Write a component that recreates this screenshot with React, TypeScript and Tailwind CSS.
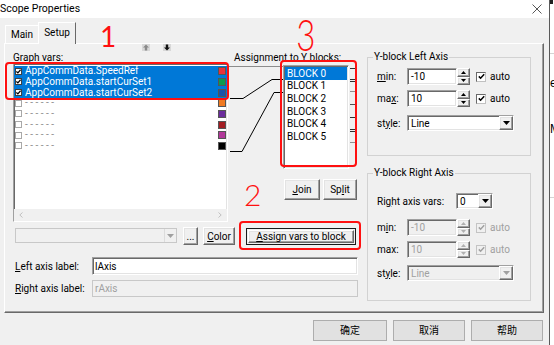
import React from "react";

const sunken =
  "border border-t-[#a0a0a0] border-l-[#a0a0a0] border-r-white border-b-white shadow-[inset_1px_1px_0_#696969,inset_-1px_-1px_0_#e3e3e3]";
const raised =
  "border border-t-white border-l-white border-r-[#696969] border-b-[#696969] shadow-[inset_-1px_-1px_0_#a0a0a0,inset_1px_1px_0_#e3e3e3] bg-[#f0f0f0]";

function U({ children }: { children: React.ReactNode }) {
  return <span className="underline underline-offset-[1px] decoration-[1px]">{children}</span>;
}

function Tri({ up = false, color = "#000", w = 7 }: { up?: boolean; color?: string; w?: number }) {
  const h = Math.ceil(w / 2);
  return (
    <svg width={w} height={h} viewBox={`0 0 ${w} ${h}`}>
      <path d={up ? `M0 ${h} L${w / 2} 0 L${w} ${h} Z` : `M0 0 L${w} 0 L${w / 2} ${h} Z`} fill={color} />
    </svg>
  );
}

function Check({ checked = true, disabled = false }: { checked?: boolean; disabled?: boolean }) {
  return (
    <span
      className={`w-[10px] h-[10px] flex items-center justify-center border ${
        disabled ? "border-[#c4c4c4] bg-[#f0f0f0]" : "border-t-[#696969] border-l-[#696969] border-r-[#c0c0c0] border-b-[#c0c0c0] bg-white"
      }`}
    >
      {checked && (
        <svg width="7" height="7" viewBox="0 0 7 7">
          <path d="M0.8 3.4 L2.6 5.2 L6.2 1.2" fill="none" stroke={disabled ? "#a0a0a0" : "#000"} strokeWidth="1.5" />
        </svg>
      )}
    </span>
  );
}

function Spin({ value, disabled = false }: { value: string; disabled?: boolean }) {
  const tc = disabled ? "#b0b0b0" : "#000";
  return (
    <div className="flex h-full">
      <div
        className={`w-[50px] h-full ${sunken} ${disabled ? "bg-[#f0f0f0] text-[#a0a0a0]" : "bg-white"} pl-[3px] flex items-center`}
      >
        {value}
      </div>
      <div className="w-[13px] h-full flex flex-col">
        <div className={`flex-1 ${raised} flex items-center justify-center`}>
          <Tri up color={tc} w={5} />
        </div>
        <div className={`flex-1 ${raised} flex items-center justify-center`}>
          <Tri color={tc} w={5} />
        </div>
      </div>
    </div>
  );
}

function Select({ value, wClass, disabled = false }: { value: string; wClass: string; disabled?: boolean }) {
  return (
    <div className={`${wClass} h-full flex ${sunken} ${disabled ? "bg-[#f0f0f0] text-[#a0a0a0]" : "bg-white"}`}>
      <div className="flex-1 pl-[3px] flex items-center">{value}</div>
      <div className={`w-[14px] ${raised} flex items-center justify-center`}>
        <Tri color={disabled ? "#a0a0a0" : "#000"} w={7} />
      </div>
    </div>
  );
}

function Btn({ children, cls }: { children: React.ReactNode; cls: string }) {
  return <div className={`${raised} flex items-center justify-center ${cls}`}>{children}</div>;
}

const vars = [
  { name: "AppCommData.SpeedRef", on: true, color: "#e8323c" },
  { name: "AppCommData.startCurSet1", on: true, color: "#0c9a4e" },
  { name: "AppCommData.startCurSet2", on: true, color: "#1b54a8" },
  { name: "------", on: false, color: "#f07a22" },
  { name: "------", on: false, color: "#6b2c9c" },
  { name: "------", on: false, color: "#a31d23" },
  { name: "------", on: false, color: "#b2389a" },
  { name: "------", on: false, color: "#000000" },
];

const blocks = ["BLOCK 0", "BLOCK 1", "BLOCK 2", "BLOCK 3", "BLOCK 4", "BLOCK 5"];

function GraphList() {
  return (
    <div className={`w-[215px] h-[159px] bg-white ${sunken} flex flex-col`}>
      <div className="pt-[2px] flex flex-col">
        {vars.map((v, i) => (
          <div
            key={i}
            className={`h-[10.67px] flex items-center pl-[1px] pr-[1px] ${v.on ? "bg-[#0078d7] text-white" : "text-[#909090]"}`}
          >
            <span
              className={`w-[7px] h-[7px] bg-white border flex items-center justify-center ${
                v.on ? "border-[#404040]" : "border-[#a8a8a8]"
              }`}
            >
              {v.on && (
                <svg width="5" height="5" viewBox="0 0 5 5">
                  <path d="M0.4 2.4 L1.9 3.9 L4.6 0.8" fill="none" stroke="#000" strokeWidth="1.3" />
                </svg>
              )}
            </span>
            <span className="ml-[3px] flex-1 leading-[10px] whitespace-nowrap">{v.on ? v.name : "- - - - - -"}</span>
            <span className="w-[8px] h-[8px] border border-[#555]" style={{ backgroundColor: v.color }} />
          </div>
        ))}
      </div>
      <div className="mt-auto h-[12px] bg-[#f0f0f0] flex items-center justify-between px-[5px]">
        <svg width="4" height="6" viewBox="0 0 4 6">
          <path d="M3.5 0.5 L0.8 3 L3.5 5.5" fill="none" stroke="#c0c0c0" strokeWidth="1" />
        </svg>
        <svg width="4" height="6" viewBox="0 0 4 6">
          <path d="M0.5 0.5 L3.2 3 L0.5 5.5" fill="none" stroke="#c0c0c0" strokeWidth="1" />
        </svg>
      </div>
    </div>
  );
}

export default function App() {
  return (
    <div className="w-[554px] h-[345px] bg-[#f0f0f0] flex overflow-hidden relative text-[10px] text-black font-['Roboto','Noto_Sans_CJK_SC',sans-serif]">
      <div className="w-[549px] h-full flex flex-col">
        {/* title bar */}
        <div className="h-[18px] bg-white flex items-center justify-between shrink-0">
          <span className="text-[10.5px] leading-[18px]">Scope Properties</span>
          <svg className="mr-[7px]" width="10" height="10" viewBox="0 0 10 10">
            <path d="M0.5 0.5L9.5 9.5M9.5 0.5L0.5 9.5" stroke="#444" strokeWidth="0.9" />
          </svg>
        </div>

        {/* tabs */}
        <div className="h-[25px] flex items-end pl-[5px] shrink-0">
          <div className="w-[33px] h-[18px] border-t border-l border-t-white border-l-white flex items-center justify-center pb-[1px]">
            Main
          </div>
          <div className="relative z-10 -mb-[1px] w-[38px] h-[22px] bg-[#f0f0f0] border-t border-l border-r border-t-white border-l-white border-r-[#696969] flex items-center justify-center pb-[2px]">
            Setup
          </div>
        </div>

        {/* panel */}
        <div className="ml-[4px] w-[540px] h-[270px] shrink-0 border border-t-white border-l-white border-r-[#696969] border-b-[#696969] shadow-[inset_-1px_-1px_0_#a0a0a0] flex">
          {/* left section */}
          <div className="w-[362px] pl-[8px] flex flex-col">
            {/* header */}
            <div className="h-[19px] flex">
              <div className="w-[215px] flex flex-col">
                <div className="h-[8px] flex items-start pl-[129px] gap-[13px]">
                  <svg width="8" height="7" viewBox="0 0 8 7">
                    <rect x="0" y="0" width="8" height="7" fill="#d8d8d8" />
                    <path d="M4 0.5 L7 3.5 H5.2 V6.5 H2.8 V3.5 H1 Z" fill="#8a8a8a" />
                  </svg>
                  <svg width="8" height="7" viewBox="0 0 8 7">
                    <rect x="0" y="0" width="8" height="7" fill="#d8d8d8" />
                    <path d="M4 6.5 L7 3.5 H5.2 V0.5 H2.8 V3.5 H1 Z" fill="#111" />
                  </svg>
                </div>
                <div className="h-[11px] leading-[11px]">Graph vars:</div>
              </div>
              <div className="ml-[6px] self-end leading-[11px] whitespace-nowrap">Assignment to Y blocks:</div>
            </div>

            {/* main row */}
            <div className="h-[159px] flex">
              <GraphList />
              <svg width="55" height="159" viewBox="0 0 55 159">
                <path d="M1 3.5 H55" stroke="#8c8c8c" strokeWidth="1" />
                <path d="M2 35.5 H15 L44 16.5 H55" fill="none" stroke="#000" strokeWidth="1" />
                <path d="M2 88.5 H14 L46 29.5 H55" fill="none" stroke="#000" strokeWidth="1" />
              </svg>
              <div className="w-[74px] flex flex-col">
                <div className="mt-[2px] h-[104px] flex">
                  <div className={`w-[66px] h-full bg-white ${sunken} pt-[1px] px-[1px] flex flex-col`}>
                    {blocks.map((b, i) => (
                      <div
                        key={b}
                        className={`h-[12.6px] pl-[2px] flex items-center whitespace-nowrap ${
                          i === 0 ? "bg-[#0078d7] text-white" : ""
                        }`}
                      >
                        {b}
                      </div>
                    ))}
                  </div>
                  <svg width="8" height="104" viewBox="0 0 8 104">
                    <path d="M1 3.5 H6" stroke="#303030" />
                    <path d="M1 14.5 H7" stroke="#303030" />
                    <path d="M1 16.5 H7" stroke="#303030" />
                    <path d="M1 26.5 H7" stroke="#909090" />
                    <path d="M1 39.5 H7" stroke="#505050" />
                    <path d="M1 52.5 H7" stroke="#303030" />
                    <path d="M1 64.5 H7" stroke="#303030" />
                    <path d="M1 66.5 H7" stroke="#303030" />
                    <path d="M1 77.5 H7" stroke="#909090" />
                  </svg>
                </div>
                <div className="mt-[10px] h-[21px] flex gap-[3px] pl-[1px]">
                  <Btn cls="w-[36px] h-full">
                    <U>J</U>oin
                  </Btn>
                  <Btn cls="w-[34px] h-full">
                    Sp<U>l</U>it
                  </Btn>
                </div>
              </div>
            </div>

            {/* controls row */}
            <div className="mt-[5px] h-[18px] flex items-start">
              <div className="ml-[2px] mt-[1px] w-[162px] h-[15px] flex border border-[#c8c8c8] bg-[#f0f0f0]">
                <div className="flex-1" />
                <div className="w-[12px] border-l border-[#dcdcdc] flex items-center justify-center">
                  <Tri color="#a0a0a0" w={7} />
                </div>
              </div>
              <Btn cls="ml-[6px] w-[15px] h-[18px]">...</Btn>
              <Btn cls="ml-[5px] w-[32px] h-[18px]">
                <span>
                  <U>C</U>olor
                </span>
              </Btn>
              <div className="ml-[11px] mt-[1px] w-[110px] h-[17px] border border-[#1a1a1a] p-[1px]">
                <div className={`w-full h-full ${raised} flex items-center justify-center`}>
                  <span>
                    <U>A</U>ssign vars to block
                  </span>
                </div>
              </div>
            </div>

            {/* left axis label */}
            <div className="mt-[12px] h-[18px] flex items-center">
              <span className="ml-[2px] w-[77px]">
                <U>L</U>eft axis label:
              </span>
              <div className={`w-[266px] h-full bg-white ${sunken} pl-[2px] flex items-center`}>lAxis</div>
            </div>
            <div className="mt-[5px] h-[17px] flex items-center">
              <span className="ml-[2px] w-[77px]">
                <U>R</U>ight axis label:
              </span>
              <div className="w-[266px] h-full bg-[#f0f0f0] border border-[#c8c8c8] pl-[2px] flex items-center text-[#a0a0a0]">
                rAxis
              </div>
            </div>
          </div>

          {/* right section */}
          <div className="w-[164px] pt-[7px] flex flex-col">
            <fieldset className="h-[105px] border border-[#d2d2d2]">
              <legend className="ml-[5px] px-[1px] leading-[12px]">Y-block Left Axis</legend>
              <div className="pl-[9px] flex flex-col">
                <div className="mt-[5px] h-[17px] flex items-center">
                  <span className="w-[30px]">
                    <U>m</U>in:
                  </span>
                  <Spin value="-10" />
                  <span className="ml-[6px]">
                    <Check />
                  </span>
                  <span className="ml-[4px]">auto</span>
                </div>
                <div className="mt-[5px] h-[17px] flex items-center">
                  <span className="w-[30px]">
                    ma<U>x</U>:
                  </span>
                  <Spin value="10" />
                  <span className="ml-[6px]">
                    <Check />
                  </span>
                  <span className="ml-[4px]">auto</span>
                </div>
                <div className="mt-[8px] h-[16px] flex items-center">
                  <span className="w-[30px]">
                    st<U>y</U>le:
                  </span>
                  <Select value="Line" wClass="w-[107px]" />
                </div>
              </div>
            </fieldset>

            <fieldset className="mt-[11px] h-[134px] border border-[#d2d2d2]">
              <legend className="ml-[5px] px-[1px] leading-[12px]">Y-block Right Axis</legend>
              <div className="pl-[9px] flex flex-col">
                <div className="mt-[14px] h-[16px] flex items-center">
                  <span className="w-[79px]">
                    Ri<U>g</U>ht axis vars:
                  </span>
                  <Select value="0" wClass="w-[37px]" />
                </div>
                <div className="mt-[10px] h-[17px] flex items-center">
                  <span className="w-[30px]">
                    m<U>i</U>n:
                  </span>
                  <Spin value="-10" disabled />
                  <span className="ml-[6px]">
                    <Check disabled />
                  </span>
                  <span className="ml-[4px] text-[#a0a0a0]">auto</span>
                </div>
                <div className="mt-[5px] h-[17px] flex items-center">
                  <span className="w-[30px]">max:</span>
                  <Spin value="10" disabled />
                  <span className="ml-[6px]">
                    <Check disabled />
                  </span>
                  <span className="ml-[4px] text-[#a0a0a0]">auto</span>
                </div>
                <div className="mt-[7px] h-[16px] flex items-center">
                  <span className="w-[30px]">
                    st<U>y</U>le:
                  </span>
                  <Select value="Line" wClass="w-[107px]" disabled />
                </div>
              </div>
            </fieldset>
          </div>
        </div>

        {/* dialog buttons */}
        <div className="mt-[7px] h-[21px] flex justify-end gap-[6px] pr-[6px]">
          <div className="w-[74px] h-full bg-[#e1e1e1] border border-[#adadad] flex items-center justify-center">确定</div>
          <div className="w-[72px] h-full bg-[#e1e1e1] border border-[#adadad] flex items-center justify-center">取消</div>
          <div className="w-[72px] h-full bg-[#e1e1e1] border border-[#adadad] flex items-center justify-center">帮助</div>
        </div>
      </div>

      {/* window behind, right strip */}
      <div className="w-[5px] h-full border-l border-[#5a5a5a] bg-white flex flex-col overflow-hidden">
        <div className="h-[4px] w-[3px] bg-[#202020]" />
        <div className="mt-[49px] h-px w-full bg-[#d4d4d4]" />
        <div className="mt-[22px] h-[14px] leading-[14px] text-[12px] font-['Liberation_Sans',sans-serif] whitespace-nowrap">e</div>
        <div className="mt-[32px] h-[14px] leading-[14px] text-[12px] font-['Liberation_Sans',sans-serif] whitespace-nowrap">M</div>
        <div className="mt-[61px] h-px w-full bg-[#d4d4d4]" />
      </div>

      {/* red annotations */}
      <div className="absolute left-[5px] top-[62px] w-[224px] h-[38px] border-2 border-[#ff1010] rounded-[4px] pointer-events-none" />
      <div className="absolute left-[280px] top-[60px] w-[77px] h-[107px] border-2 border-[#ff1010] rounded-[4px] pointer-events-none" />
      <div className="absolute left-[239px] top-[221px] w-[122px] h-[29px] border-2 border-[#ff1010] rounded-[4px] pointer-events-none" />
      <div className="absolute left-[100px] top-[22px] text-[28px] leading-none text-[#ff1010] font-['Lato',sans-serif] font-normal pointer-events-none">
        1
      </div>
      <div className="absolute left-[244px] top-[179px] text-[30px] leading-none text-[#ff1010] font-['Lato',sans-serif] font-light pointer-events-none">
        2
      </div>
      <div className="absolute left-[293px] top-[12px] text-[44px] leading-none text-[#ff1010] font-['Lato',sans-serif] font-light scale-x-[0.75] pointer-events-none">
        3
      </div>
    </div>
  );
}
